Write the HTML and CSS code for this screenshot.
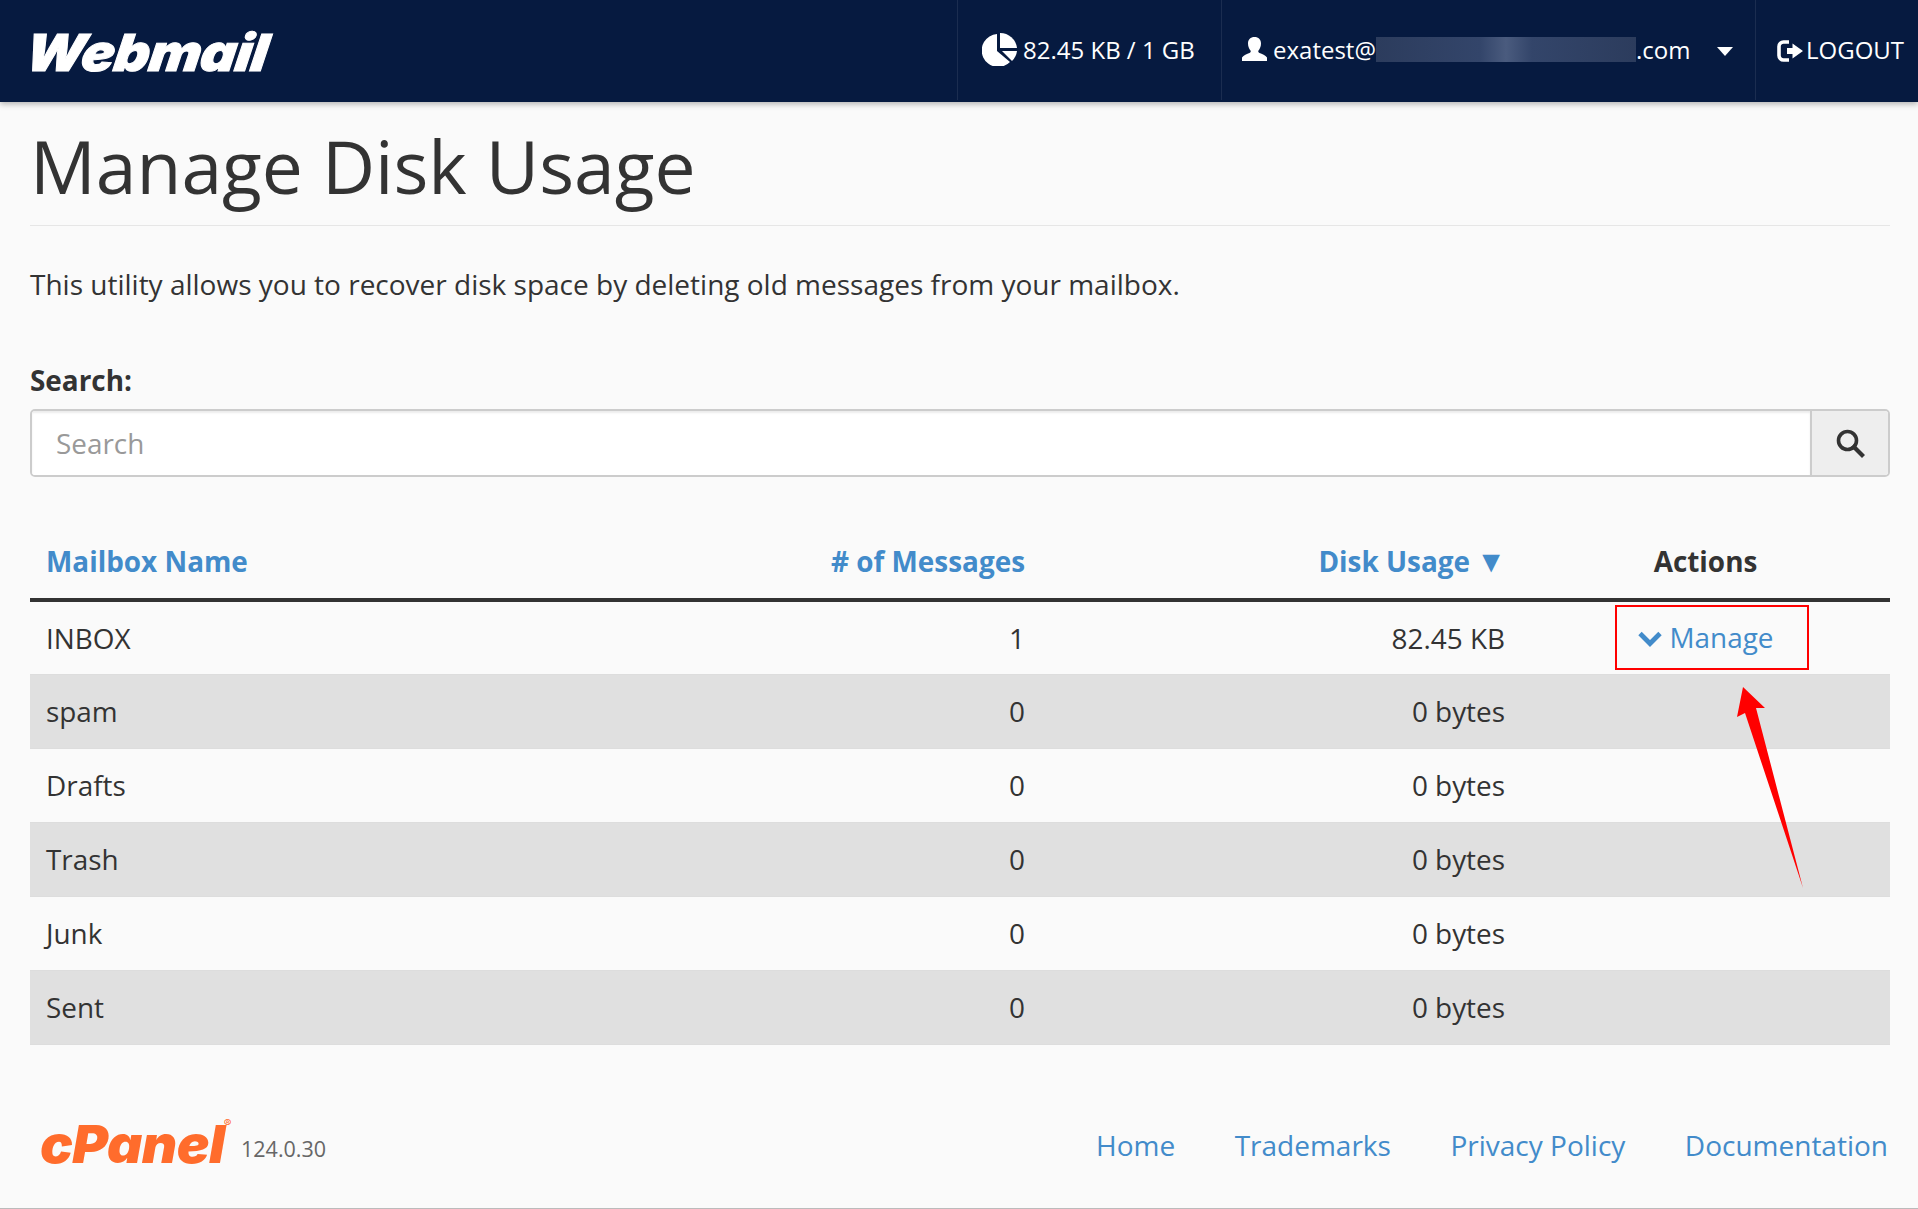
FILE: index.html
```html
<!DOCTYPE html>
<html lang="en">
<head>
<meta charset="utf-8">
<title>Manage Disk Usage</title>
<link rel="stylesheet" href="styles.css">
</head>
<body>
<header class="topbar">
  <div class="brand"><span class="brand-text">Webmail</span></div>
  <div class="nav-item nav-usage">
    <svg class="ico-pie" viewBox="0 0 35 33"><path d="M15 1A16.500 16.500 0 1 0 28 29L15 18Z" fill="#fff"/><path d="M18 0A17 17 0 0 1 35 15H18Z" fill="#fff"/><path d="M20 18H35A17 17 0 0 1 30 28Z" fill="#fff"/></svg>
    <span>82.45 KB / 1 GB</span>
  </div>
  <div class="nav-item nav-user">
    <svg class="ico-user" viewBox="0 0 25 24"><path d="M12.500 0c4 0 6.500 2.500 6.500 6.500 0 3-1.200 5.500-2.500 7-.6 1 0 2 1 2.500 2.500 1 6 2 7.500 4.500V24H0v-3.500c1.500-2.500 5-3.500 7.500-4.500 1-.5 1.600-1.500 1-2.500-1.300-1.500-2.500-4-2.500-7C6 2.500 8.500 0 12.500 0Z" fill="#fff"/></svg>
    <span>exatest@</span><span class="blurred"></span><span>.com</span>
    <span class="caret"></span>
  </div>
  <div class="nav-item nav-logout">
    <svg class="ico-logout" viewBox="0 0 26 22"><path d="M12 2H6.500a4.500 4.500 0 0 0-4.500 4.500v9a4.500 4.500 0 0 0 4.500 4.500H12" fill="none" stroke="#fff" stroke-width="3.600"/><path d="M10 8h5.500V3.500L26 11 15.500 18.500V14H10Z" fill="#fff"/></svg>
    <span>LOGOUT</span>
  </div>
</header>

<main class="page">
  <h1 class="title">Manage Disk Usage</h1>
  <p class="intro">This utility allows you to recover disk space by deleting old messages from your mailbox.</p>

  <label class="search-label" for="q">Search:</label>
  <div class="search">
    <input id="q" class="search-input" type="text" placeholder="Search">
    <button class="search-btn" type="button" aria-label="Search">
      <svg viewBox="0 0 30 30"><circle cx="12.500" cy="12.500" r="9" fill="none" stroke="#333" stroke-width="3.600"/><path d="M19 19l8 8" stroke="#333" stroke-width="4.200" stroke-linecap="square"/></svg>
    </button>
  </div>

  <table class="mail">
    <colgroup><col class="c1"><col class="c2"><col class="c3"><col class="c4"></colgroup>
    <thead>
      <tr>
        <th class="left link">Mailbox Name</th>
        <th class="right link">#&nbsp;of Messages</th>
        <th class="right link">Disk Usage <span class="sort">▼</span></th>
        <th class="center">Actions</th>
      </tr>
    </thead>
    <tbody>
      <tr><td>INBOX</td><td class="right">1</td><td class="right">82.45 KB</td>
        <td class="center"><a class="manage" href="#"><svg class="ico-chev" viewBox="0 0 24 16"><path d="M2 2.500 12 12.500 22 2.500" fill="none" stroke="#428bca" stroke-width="4.800"/></svg>Manage</a></td></tr>
      <tr class="alt"><td>spam</td><td class="right">0</td><td class="right">0 bytes</td><td></td></tr>
      <tr><td>Drafts</td><td class="right">0</td><td class="right">0 bytes</td><td></td></tr>
      <tr class="alt"><td>Trash</td><td class="right">0</td><td class="right">0 bytes</td><td></td></tr>
      <tr><td>Junk</td><td class="right">0</td><td class="right">0 bytes</td><td></td></tr>
      <tr class="alt"><td>Sent</td><td class="right">0</td><td class="right">0 bytes</td><td></td></tr>
    </tbody>
  </table>

  <footer class="foot">
    <div class="foot-brand"><span class="cpanel">cPanel<sup class="reg">®</sup></span><span class="version">124.0.30</span></div>
    <nav class="foot-links">
      <a href="#">Home</a><a href="#">Trademarks</a><a href="#">Privacy Policy</a><a href="#">Documentation</a>
    </nav>
  </footer>
</main>

<div class="mark-box"></div>
<svg class="mark-arrow" viewBox="0 0 1918 1209"><polygon points="1743,687 1765,708 1756,708 1803,888 1745,713 1737,717" fill="#ff0000"/></svg>
</body>
</html>
```
FILE: styles.css
```css
* { box-sizing: border-box; }
html { height: 1209px; overflow: hidden; }
html, body { margin: 0; padding: 0; }
body {
  width: 1918px;
  height: 1209px;
  overflow: hidden;
  position: relative;
  background: #fafafa;
  color: #333;
  font-family: "Open Sans", "Liberation Sans", sans-serif;
  font-size: 27.9px;
  border-bottom: 1px solid #bbb;
}
a { color: #428bca; text-decoration: none; }

.topbar {
  height: 102px;
  background: #061a40;
  display: flex;
  align-items: stretch;
  color: #fff;
  box-shadow: 0 2px 6px rgba(0,0,0,.3);
  font-size: 24px;
}
.brand { width: 957px; padding-left: 26px; display: flex; align-items: center; }
.brand-text {
  display: inline-block;
  font-family: Inter, "Liberation Sans", sans-serif;
  font-weight: 900;
  font-style: italic;
  font-size: 51px;
  line-height: 1;
  letter-spacing: -0.5px;
  transform: scaleX(1.08) skewX(-8deg);
  transform-origin: left center;
  -webkit-text-stroke: 1px #fff;
  margin-top: 2px;
}
.nav-item {
  display: flex;
  align-items: center;
  height: 100px;
  border-left: 1px solid #1b2d50;
  padding-bottom: 2px;
}
.nav-usage { width: 264px; padding-left: 24px; }
.nav-user { width: 534px; padding-left: 20px; }
.nav-logout { width: 163px; padding-left: 21px; }
.ico-pie { width: 35px; height: 33px; margin-right: 6px; }
.ico-user { width: 25px; height: 24px; margin-right: 6px; }
.ico-logout { width: 26px; height: 22px; margin-right: 3px; margin-top: 3px; }
.blurred {
  width: 260px;
  height: 25px;
  background: linear-gradient(90deg, #2c3c5d 0%, #33456a 40%, #4a5b7e 50%, #33456a 60%, #2c3c5d 100%);
}
.caret {
  width: 0; height: 0;
  margin-left: 27px;
  border-left: 8px solid transparent;
  border-right: 8px solid transparent;
  border-top: 9px solid #fff;
  margin-top: 4px;
}

.page { padding: 0 28px 0 30px; }
.title {
  margin: 0;
  height: 124px;
  padding-top: 21px;
  font-size: 73.2px;
  line-height: 86px;
  font-weight: 400;
  border-bottom: 1px solid #e6e6e6;
  color: #333;
}
.intro { margin: 39px 0 0; font-size: 28px; line-height: 38px; }
.search-label { display: block; margin-top: 59px; font-weight: 700; font-size: 27.9px; line-height: 36px; }
.search {
  display: flex;
  height: 68px;
  margin-top: 11px;
  border: 2px solid #ccc;
  border-radius: 5px;
  overflow: hidden;
  background: #fff;
}
.search-input {
  flex: 1;
  border: 0;
  outline: 0;
  padding: 0 24px;
  font: 27.9px "Open Sans", sans-serif;
  box-shadow: inset 0 2px 2px rgba(0,0,0,.08);
}
.search-input::placeholder { color: #999; opacity: 1; }
.search-btn {
  width: 78px;
  border: 0;
  border-left: 2px solid #ccc;
  background: #eee;
  padding: 0;
  display: flex;
  align-items: center;
  justify-content: center;
}
.search-btn svg { width: 30px; height: 30px; }

.mail { width: 100%; margin-top: 55px; border-collapse: collapse; table-layout: fixed; }
.c1 { width: 600px; }
.c2 { width: 411px; }
.c3 { width: 480px; }
.c4 { width: 369px; }
.mail th {
  height: 68px;
  padding: 0 16px 8px;
  font-size: 27.9px;
  font-weight: 700;
  border-bottom: 4px solid #333;
}
.mail th.link { color: #428bca; }
.sort { font-size: 30px; line-height: 0; margin-left: -1px; margin-right: -1px; }
.mail td {
  height: 74px;
  padding: 0 16px;
  font-size: 27.9px;
  border-bottom: 1px solid #ddd;
}
.mail tr.alt td { background: #e0e0e0; }
.left { text-align: left; }
.right { text-align: right; }
.center { text-align: center; }
.manage { display: inline-flex; align-items: center; margin-bottom: 3px; }
.ico-chev { width: 24px; height: 16px; margin-right: 8px; margin-top: 3px; }

.foot { display: flex; justify-content: space-between; align-items: center; margin-top: 75px; }
.foot-brand { display: flex; align-items: flex-end; padding-left: 10px; }
.cpanel {
  position: relative;
  display: inline-block;
  width: 201px;
  font-family: Inter, "Liberation Sans", sans-serif;
  font-weight: 900;
  font-style: italic;
  font-size: 52px;
  line-height: 50px;
  color: #ff6c2c;
  letter-spacing: -0.5px;
  transform: scaleX(1.05);
  transform-origin: left center;
}
.reg { position: absolute; top: -2px; left: 175px; font-size: 11px; font-weight: 400; font-style: normal; line-height: 1; letter-spacing: 0; }
.version { font-size: 21.5px; color: #666; line-height: 30px; position: relative; top: -6px; }
.foot-links { display: flex; gap: 59.5px; font-size: 28px; padding-right: 2px; }

.mark-box {
  position: absolute;
  left: 1615px; top: 605px;
  width: 194px; height: 65px;
  border: 2px solid #f00;
}
.mark-arrow { position: absolute; left: 0; top: 0; width: 1918px; height: 1209px; pointer-events: none; }
```
